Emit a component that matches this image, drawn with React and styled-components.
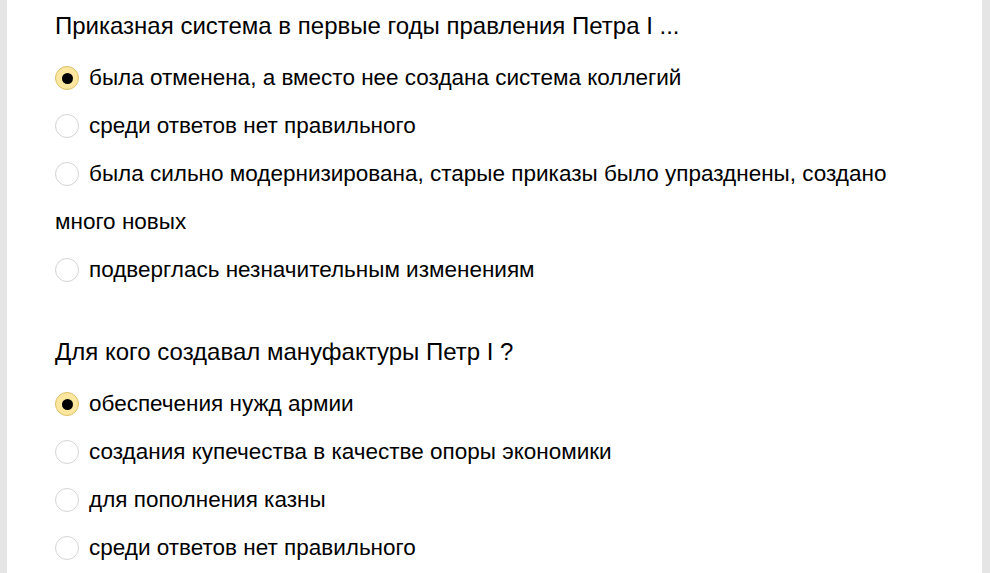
import styled, { createGlobalStyle } from "styled-components";

const GlobalStyle = createGlobalStyle`
    html, body {
        margin: 0;
        padding: 0;
        background: #e5e5e5;
        font-family: "Liberation Sans", Arial, sans-serif;
        color: #000;
    }
`

const Page = styled.div`
    height: 573px;
    overflow: hidden;
    padding: 0 8px 0 7px;
`

const Card = styled.div`
    background: #fff;
    height: 100%;
    padding: 6px 48px 0 48px;
    box-sizing: border-box;
`

const Question = styled.section`
    margin-bottom: 38px;
`

const Title = styled.div`
    font-size: 24px;
    line-height: 40px;
    margin-bottom: 8px;
`

const Option = styled.label`
    display: block;
    font-size: 22.5px;
    line-height: 48px;
    cursor: pointer;
`

const Radio = styled.span`
    display: inline-block;
    position: relative;
    width: 24px;
    height: 24px;
    box-sizing: border-box;
    border-radius: 50%;
    margin-right: 10px;
    vertical-align: -5px;
    border: 1px solid ${(p) => (p.$checked ? "#dcc06a" : "#d4d4d4")};
    background: ${(p) => (p.$checked ? "#fde79e" : "#fff")};

    &::after {
        content: "";
        display: ${(p) => (p.$checked ? "block" : "none")};
        position: absolute;
        left: 50%;
        top: 50%;
        width: 11px;
        height: 11px;
        margin: -5.5px 0 0 -5.5px;
        border-radius: 50%;
        background: #000;
    }
`

const questions = [
    {
        title: "Приказная система в первые годы правления Петра I ...",
        options: [
            "была отменена, а вместо нее создана система коллегий",
            "среди ответов нет правильного",
            "была сильно модернизирована, старые приказы было упразднены, создано много новых",
            "подверглась незначительным изменениям",
        ],
        checked: 0,
    },
    {
        title: "Для кого создавал мануфактуры Петр I ?",
        options: [
            "обеспечения нужд армии",
            "создания купечества в качестве опоры экономики",
            "для пополнения казны",
            "среди ответов нет правильного",
        ],
        checked: 0,
    },
]

const App = () => {
    return (
        <>
            <GlobalStyle />
            <Page>
                <Card>
                    {questions.map((q, qi) => (
                        <Question key={qi}>
                            <Title>{q.title}</Title>
                            {q.options.map((o, oi) => (
                                <Option key={oi}>
                                    <Radio $checked={oi === q.checked} />
                                    {o}
                                </Option>
                            ))}
                        </Question>
                    ))}
                </Card>
            </Page>
        </>
    );
}

export default App;
